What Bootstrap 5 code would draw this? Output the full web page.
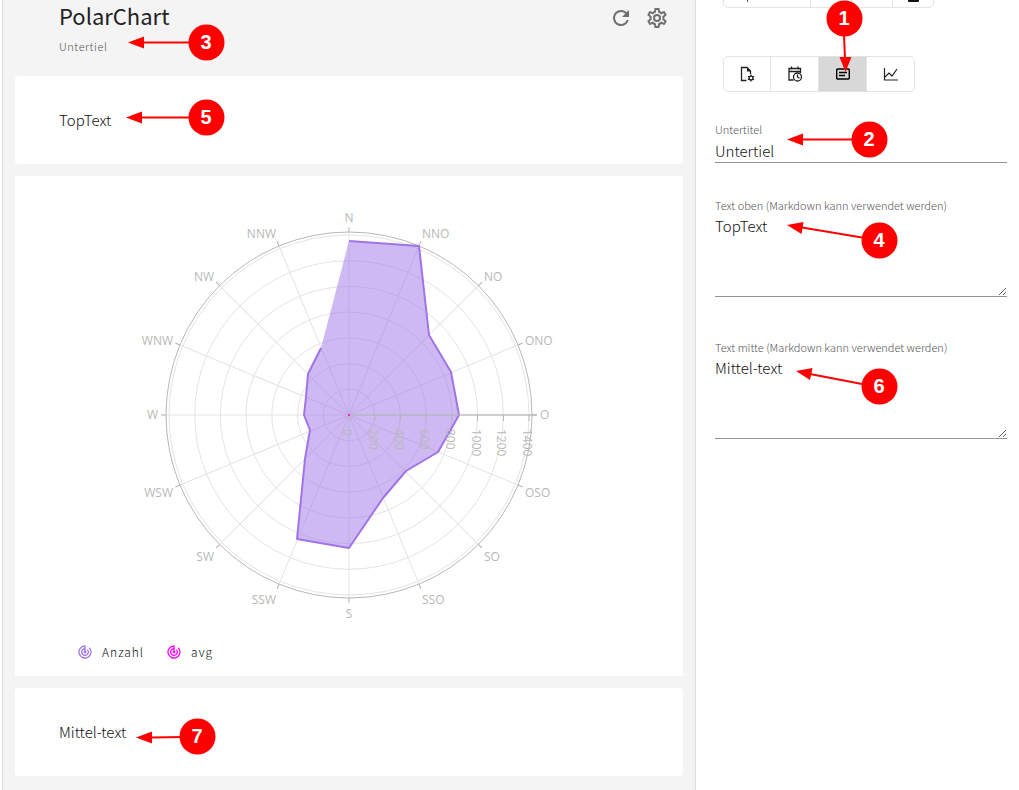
<!DOCTYPE html>
<html lang="de">
<head>
<meta charset="utf-8">
<meta name="viewport" content="width=device-width, initial-scale=1">
<title>PolarChart</title>
<link href="https://cdn.jsdelivr.net/npm/bootstrap@5.3.0/dist/css/bootstrap.min.css" rel="stylesheet">
<style>
  body { font-family: "Noto Sans CJK JP", "Noto Sans", sans-serif; font-size: 15px; line-height: 20px; color: #111; font-weight: 300; }
  .preview { background: #f4f4f4; border-left: 1px solid #ddd; border-right: 1px solid #ddd; margin-left: 2px; padding: 0 12px 14px; min-width: 0; }
  .preview-head { height: 76px; padding: 0 16px 0 44px; }
  .preview-title { font-size: 22px; line-height: 30px; font-weight: 400; color: #222; margin: 0 0 6px; }
  .subtitle { font-size: 11px; line-height: 20px; letter-spacing: .05em; color: #555; margin: 0; }
  .tools { gap: 14px; padding-top: 6px; }
  .tool { border: 0; background: none; padding: 0; color: #6f6f6f; line-height: 0; }
  .panel { background: #fff; border-radius: 4px; margin-bottom: 12px; }
  .panel-note { padding: 34px 44px; }
  .panel-chart { border-radius: 0; padding: 24px 0 12px; }
  .legend-row { font-size: 12px; letter-spacing: 1px; padding: 0 62px; gap: 22px; height: 24px; }
  .legend-item { gap: 9px; }
  .plot { height: 440px; width: 100%; }
  .plot text { font-family: "Open Sans", sans-serif; font-size: 12px; fill: #b8b8b8; font-weight: 400; }
  .settings { width: 323px; flex: none; padding: 0 12px 0 19px; overflow: hidden; }
  .tabs { border: 1px solid #e3e3e3; border-radius: 5px; height: 36px; margin-left: 8px; overflow: hidden; display: flex; width: fit-content; }
  .tabs .btn { border: 0; border-left: 1px solid #e3e3e3; border-radius: 0; padding: 0; width: 48px; color: #222; line-height: 0; }
  .tabs .btn:first-child { border-left: 0; width: 46px; }
  .tabs .btn.active { background: #d8d8d8; color: #000; }
  .tabs-cut { margin-top: -28px; margin-bottom: 48px; }
  .tabs-cut .btn { width: 41px; }
  .tabs-cut .btn:first-child { width: 86px; }
  .field { margin-top: 32px; }
  .tabs + .field { margin-top: 27px; }
  .field + .field + .field { margin-top: 40px; }
  .field label { display: block; font-size: 11px; line-height: 20px; color: #555; }
  .field .form-control { border: 0; border-bottom: 1px solid #949494; border-radius: 0; padding: 0; font-size: 15px; line-height: 22px; height: 24px; color: #111; font-weight: 300; background: none; min-height: 0; display: block; }
  .field textarea.form-control { height: 82px; }
  .callouts { overflow: visible; pointer-events: none; }
  .callouts text { font: 700 20px "Liberation Sans", sans-serif; fill: #fff; text-anchor: middle; }
</style>
</head>
<body>
<div class="d-flex min-vh-100">
  <main class="preview flex-grow-1 position-relative">
    <header class="preview-head d-flex justify-content-between">
      <div>
        <h1 class="preview-title">PolarChart</h1>
        <p class="subtitle">Untertiel</p>
      </div>
      <div class="tools d-flex align-items-start">
        <button class="tool" type="button" aria-label="Aktualisieren"><svg width="24" height="24" viewBox="0 0 24 24" fill="currentColor"><path d="M17.65 6.35A7.96 7.96 0 0 0 12 4a8 8 0 1 0 7.73 10h-2.08A6 6 0 1 1 12 6c1.66 0 3.14.69 4.22 1.78L13 11h7V4z"/></svg></button>
        <button class="tool" type="button" aria-label="Einstellungen"><svg width="20" height="24" viewBox="2 0 20 24" fill="currentColor"><path d="M12 8a4 4 0 1 1 0 8 4 4 0 0 1 0-8m0 2a2 2 0 1 0 0 4 2 2 0 0 0 0-4m-2 12c-.25 0-.46-.18-.5-.42l-.37-2.65c-.63-.25-1.17-.59-1.69-.99l-2.49 1.01c-.22.08-.49 0-.61-.22l-2-3.46a.49.49 0 0 1 .12-.64l2.11-1.66L4.5 12l.07-1-2.11-1.63a.49.49 0 0 1-.12-.64l2-3.46c.12-.22.39-.31.61-.22l2.49 1c.52-.39 1.06-.73 1.69-.98l.37-2.65c.04-.24.25-.42.5-.42h4c.25 0 .46.18.5.42l.37 2.65c.63.25 1.17.59 1.69.98l2.49-1c.22-.09.49 0 .61.22l2 3.46c.13.22.07.49-.12.64L19.43 11l.07 1-.07 1 2.11 1.63c.19.15.25.42.12.64l-2 3.46c-.12.22-.39.31-.61.22l-2.49-1c-.52.39-1.06.73-1.69.98l-.37 2.65c-.04.24-.25.42-.5.42zm1.25-18-.37 2.61c-1.2.25-2.26.89-3.03 1.78L5.44 7.35l-.75 1.3L6.8 10.2a5.55 5.55 0 0 0 0 3.6l-2.12 1.56.75 1.3 2.43-1.04c.77.88 1.82 1.52 3.01 1.76l.37 2.62h1.52l.37-2.61c1.19-.25 2.24-.89 3.01-1.77l2.43 1.04.75-1.3-2.12-1.55c.4-1.17.4-2.44 0-3.61l2.11-1.55-.75-1.3-2.41 1.04a5.42 5.42 0 0 0-3.03-1.77L12.75 4z"/></svg></button>
      </div>
    </header>

    <section class="panel panel-note">TopText</section>

    <section class="panel panel-chart">
      <svg class="plot d-block" viewBox="-220 -215 440 440" role="img" aria-label="Polardiagramm Anzahl und avg nach Windrichtung">
        <defs>
          <g id="spoke"><path d="M0 0H183" stroke="#e4e4e4"/><path d="M183 0h5" stroke="#b0b0b0"/></g>
        </defs>
        <g fill="none" stroke="#e4e4e4">
          <circle r="25.7"/><circle r="51.4"/><circle r="77.1"/><circle r="102.9"/><circle r="128.6"/><circle r="154.3"/><circle r="180"/>
        </g>
        <g id="spokes"></g>
        <circle r="183" fill="none" stroke="#b8b8b8"/>
        <path d="M0-174 70-169 80-80 102-43 110 0 89 37 57 56 34 83 0 133-52 124-44 44-39 15-45 0-43-18-41-41-28-67Z" fill="#a074e8" fill-opacity=".5"/>
        <path d="M0-174 70-169 80-80 102-43 110 0 89 37 57 56 34 83 0 133-52 124-44 44-39 15-45 0-43-18-41-41-28-67" fill="none" stroke="#a074e8" stroke-width="2" stroke-linejoin="bevel"/>
        <path d="M0 0H188" stroke="#b8b8b8" stroke-opacity=".6" stroke-width="2"/>
        <path d="M.5 0v6M26 0v6M51.5 0v6M77 0v6M103 0v6M128.5 0v6M154.5 0v6M180 0v6" stroke="#b8b8b8"/>
        <circle r="1" fill="#f0f"/>
        <g text-anchor="middle">
          <text x="0" y="-193">N</text><text x="0" y="203">S</text>
        </g>
        <g>
          <text x="73" y="-177">NNO</text><text x="135" y="-134">NO</text><text x="176" y="-70">ONO</text><text x="191" y="4">O</text><text x="176" y="82">OSO</text><text x="135" y="146">SO</text><text x="73" y="189">SSO</text>
        </g>
        <g text-anchor="end">
          <text x="-73" y="-177">NNW</text><text x="-135" y="-134">NW</text><text x="-176" y="-70">WNW</text><text x="-191" y="4">W</text><text x="-176" y="82">WSW</text><text x="-135" y="146">SW</text><text x="-73" y="189">SSW</text>
        </g>
        <g>
          <text transform="translate(-6 14)rotate(90)">0</text><text transform="translate(20 14)rotate(90)">200</text><text transform="translate(46 14)rotate(90)">400</text><text transform="translate(71 14)rotate(90)">600</text><text transform="translate(97 14)rotate(90)">800</text><text transform="translate(123 14)rotate(90)">1000</text><text transform="translate(148 14)rotate(90)">1200</text><text transform="translate(174 14)rotate(90)">1400</text>
        </g>
      </svg>
      <div class="legend-row d-flex align-items-center">
        <span class="legend-item d-flex align-items-center"><svg width="16" height="16" viewBox="0 0 24 24" fill="#a074e8"><use href="#polar-mark"/></svg><span>Anzahl</span></span>
        <span class="legend-item d-flex align-items-center"><svg width="16" height="16" viewBox="0 0 24 24" fill="#f0f"><path id="polar-mark" d="m19.07 4.93-1.41 1.41A8 8 0 1 1 11 4.07v2.02A6 6 0 1 0 16.24 7.76l-1.41 1.41A4 4 0 1 1 11 8.14v2.14a2 2 0 1 0 2 0V2h-1a10 10 0 1 0 7.07 2.93"/></svg><span>avg</span></span>
      </div>
    </section>

    <section class="panel panel-note mb-0">Mittel-text</section>

    <svg class="callouts position-absolute top-0 start-0" width="1" height="1" fill="red" stroke="red" stroke-width="2">
      <path d="M190 42.5H138M190 117.5H138M180 737l-32 .5"/>
      <path stroke="none" d="M125 42.5l16-6v12zM123 117.5l16-6v12zM133 737.5l16-6v12z"/>
      <g stroke="none"><circle cx="203.5" cy="42.5" r="18"/><circle cx="203.5" cy="117.5" r="18"/><circle cx="194.5" cy="736.5" r="18"/>
      <text x="203" y="49">3</text><text x="203" y="124">5</text><text x="194" y="743">7</text></g>
    </svg>
  </main>

  <aside class="settings position-relative">
    <div class="tabs tabs-cut">
      <button class="btn" type="button" aria-label="Diagrammtyp"><svg width="48" height="36" viewBox="0 0 48 36"><path d="M4.5 22v7" stroke="#90278e" fill="none"/></svg></button>
      <button class="btn" type="button" aria-label="Daten"></button>
      <button class="btn" type="button" aria-label="Achsen"></button>
      <button class="btn" type="button" aria-label="Vorlage"><svg width="16" height="36" viewBox="0 0 16 36"><rect x="3" y="18" width="11" height="11" rx="1" fill="#111"/></svg></button>
    </div>
    <div class="tabs">
      <button class="btn" type="button" aria-label="Dokument"><svg width="18" height="18" viewBox="0 0 18 18" fill="none" stroke="currentColor" stroke-width="1.3"><path d="M8.500 15.500H3.500v-13H9L12.500 6v3"/><path d="M9 2v4.500h4z" fill="currentColor" stroke="none"/><circle cx="13" cy="13" r="1.900"/><path d="M13 9.500v1.500M13 15v1.500M10 11.200l1.300.8M14.700 14l1.300.8M10 14.800l1.300-.8M14.700 12l1.300-.8"/></svg></button>
      <button class="btn" type="button" aria-label="Zeitraum"><svg width="18" height="18" viewBox="0 0 18 18" fill="none" stroke="currentColor" stroke-width="1.3"><path d="M7.500 15H3V3.500h11.500V8M3 6.500h11.500M5.500 1.500v3M12 1.500v3"/><circle cx="11.500" cy="12" r="4"/><path d="M11.500 9.500V12l2 1.300"/></svg></button>
      <button class="btn active" type="button" aria-label="Texte"><svg width="18" height="18" viewBox="0 0 18 18" fill="none" stroke="currentColor" stroke-width="1.4"><rect x="2.700" y="4" width="12.600" height="10" rx="1"/><path d="M5 7.500h8M5 10.500h6"/></svg></button>
      <button class="btn" type="button" aria-label="Diagramm"><svg width="18" height="18" viewBox="0 0 18 18" fill="none" stroke="currentColor" stroke-width="1.2"><path d="M2.500 3v12H16"/><path d="m3 12 4-4 3 3 5-7"/></svg></button>
    </div>
    <div class="field">
      <label for="sub">Untertitel</label>
      <input class="form-control" id="sub" type="text" value="Untertiel">
    </div>
    <div class="field">
      <label for="top">Text oben (Markdown kann verwendet werden)</label>
      <textarea class="form-control" id="top">TopText</textarea>
    </div>
    <div class="field">
      <label for="mid">Text mitte (Markdown kann verwendet werden)</label>
      <textarea class="form-control" id="mid">Mittel-text</textarea>
    </div>

    <svg class="callouts position-absolute top-0 start-0" width="1" height="1" fill="red" stroke="red" stroke-width="2">
      <path d="M148 35l1 24M157 139.5H104M166 237.5L106 227.5M166 384L114 374"/>
      <path stroke="none" d="M149.5 72l-6-15h12zM91 139.5l16-6v12zM91 225l16.5-3-2 12zM100 371l16.5-3-2.5 12z"/>
      <g stroke="none"><circle cx="148.5" cy="18.5" r="18"/><circle cx="173.5" cy="139.5" r="18"/><circle cx="183.5" cy="240.5" r="18"/><circle cx="183.5" cy="386.5" r="18"/>
      <text x="148" y="25">1</text><text x="173" y="146">2</text><text x="183" y="247">4</text><text x="183" y="393">6</text></g>
    </svg>
  </aside>
</div>
<script src="https://cdn.jsdelivr.net/npm/bootstrap@5.3.0/dist/js/bootstrap.bundle.min.js"></script>
<script>
  const spokes = document.getElementById('spokes');
  for (let i = 0; i < 16; i++) {
    const u = document.createElementNS('http://www.w3.org/2000/svg', 'use');
    u.setAttribute('href', '#spoke');
    u.setAttribute('transform', `rotate(${i * 22.5})`);
    spokes.append(u);
  }
</script>
</body>
</html>
